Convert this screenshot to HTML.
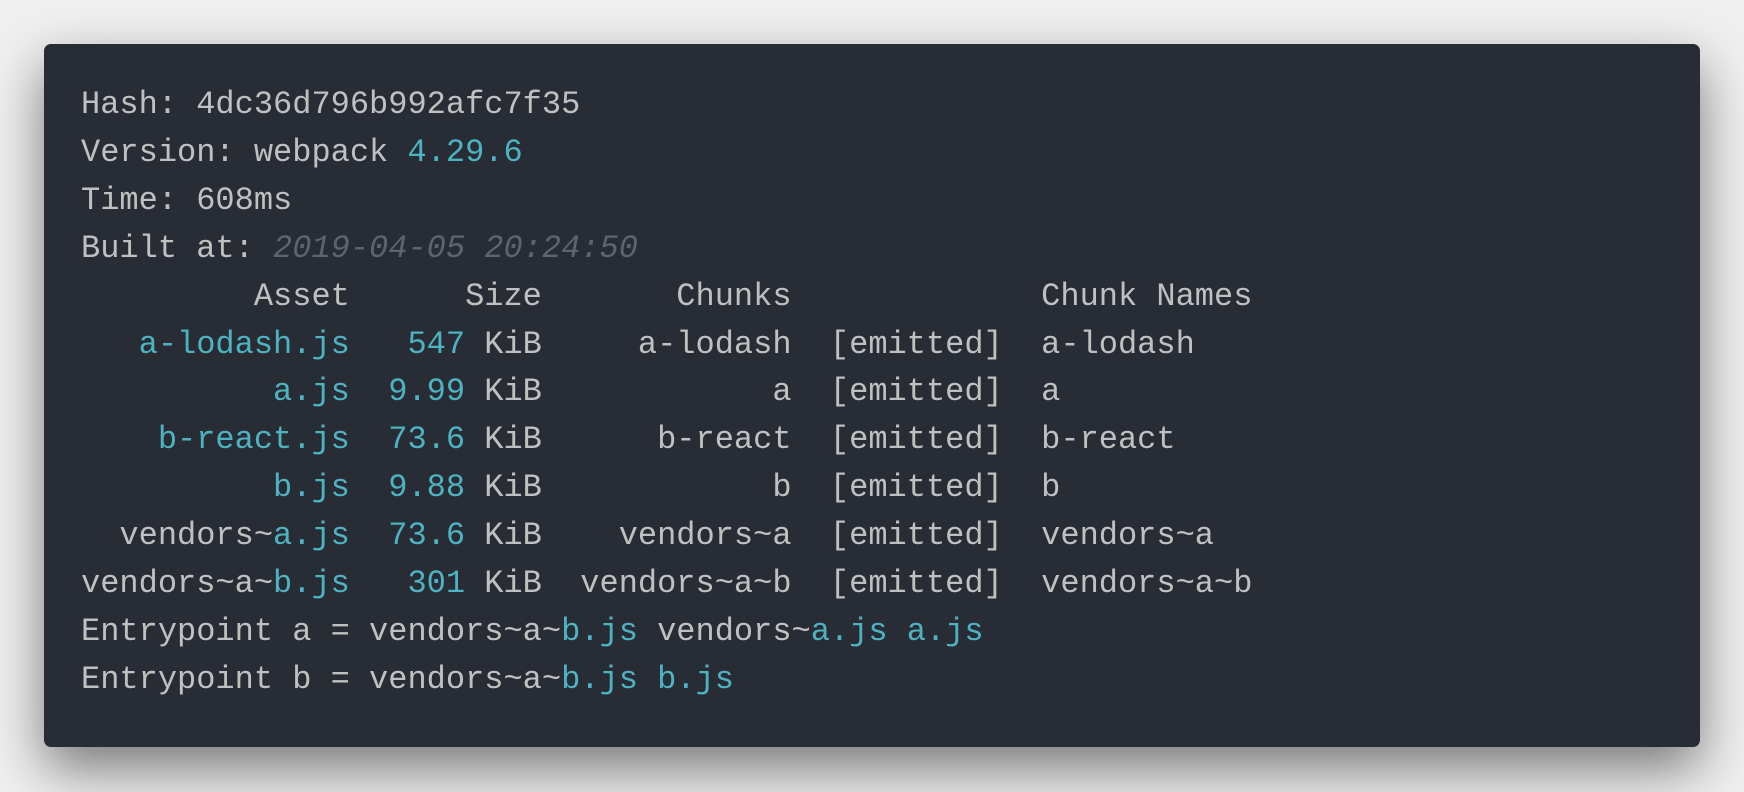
<!DOCTYPE html>
<html><head><meta charset="utf-8"><style>
html,body{margin:0;padding:0;width:1744px;height:792px;background:#f0f0f0;overflow:hidden}
.box{position:absolute;left:44px;top:44px;width:1656px;height:703px;background:#282c35;border-radius:7px;box-shadow:0 22px 55px rgba(0,0,0,.5)}
pre{margin:0;position:absolute;left:81px;top:81px;font-family:"Liberation Mono",monospace;font-size:32px;line-height:47.9px;color:#c0c0c0;white-space:pre}
.c{color:#4db3c1}
.g{color:#5d6470;font-style:italic}
</style></head><body>
<div class="box"></div>
<pre>Hash: 4dc36d796b992afc7f35
Version: webpack <span class="c">4.29.6</span>
Time: 608ms
Built at: <span class="g">2019-04-05 20:24:50</span>
         Asset      Size       Chunks             Chunk Names
   <span class="c">a-lodash.js</span>   <span class="c">547</span> KiB     a-lodash  [emitted]  a-lodash
          <span class="c">a.js</span>  <span class="c">9.99</span> KiB            a  [emitted]  a
    <span class="c">b-react.js</span>  <span class="c">73.6</span> KiB      b-react  [emitted]  b-react
          <span class="c">b.js</span>  <span class="c">9.88</span> KiB            b  [emitted]  b
  vendors~<span class="c">a.js</span>  <span class="c">73.6</span> KiB    vendors~a  [emitted]  vendors~a
vendors~a~<span class="c">b.js</span>   <span class="c">301</span> KiB  vendors~a~b  [emitted]  vendors~a~b
Entrypoint a = vendors~a~<span class="c">b.js</span> vendors~<span class="c">a.js</span> <span class="c">a.js</span>
Entrypoint b = vendors~a~<span class="c">b.js</span> <span class="c">b.js</span></pre>
</body></html>
